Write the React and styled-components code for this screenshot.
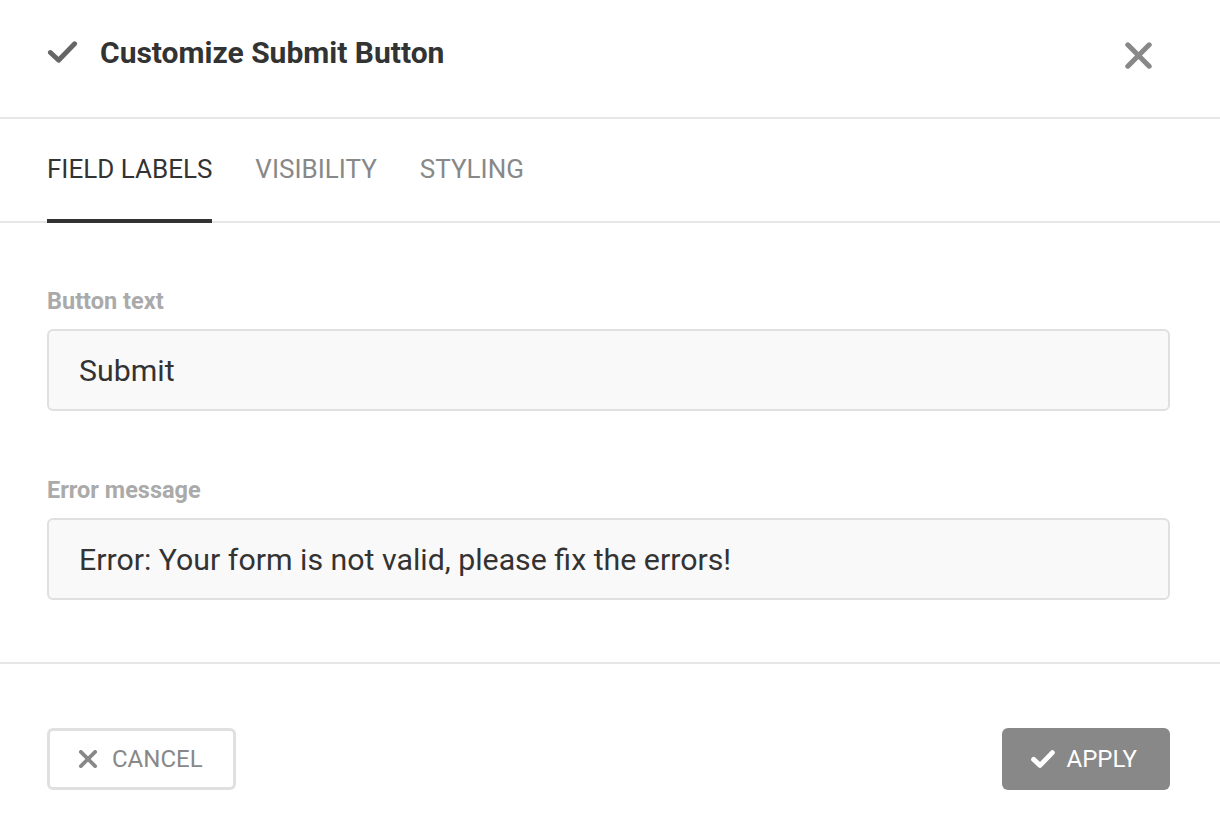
import React, { useState } from "react";
import styled, { createGlobalStyle } from "styled-components";

const GlobalStyle = createGlobalStyle`
  html, body {
    margin: 0;
    padding: 0;
    background: #fff;
    font-family: Roboto, "Liberation Sans", Arial, sans-serif;
  }
  * { box-sizing: border-box; }
`;

const Dialog = styled.div`
  width: 1220px;
  height: 839px;
  display: flex;
  flex-direction: column;
  background: #fff;
`;

const Header = styled.header`
  height: 119px;
  flex-shrink: 0;
  display: flex;
  align-items: center;
  padding: 0 68px 13px 47px;
  border-bottom: 2px solid #e6e6e6;
`;

const Title = styled.h1`
  flex: 1;
  margin: 0 0 0 22px;
  font-size: 30px;
  font-weight: 700;
  color: #333;
`;

const CloseBtn = styled.button`
  border: 0;
  background: none;
  padding: 0;
  display: flex;
  margin-top: 6px;
  cursor: pointer;
  color: #888;
`;

const TabBar = styled.nav`
  height: 104px;
  flex-shrink: 0;
  display: flex;
  gap: 43px;
  padding: 0 47px;
  border-bottom: 2px solid #e6e6e6;
`;

const Tab = styled.button`
  position: relative;
  border: 0;
  background: none;
  padding: 0 0 2px;
  font-family: inherit;
  font-size: 26px;
  font-weight: 400;
  color: ${(p) => (p.$active ? "#333" : "#888")};
  cursor: pointer;
  &::after {
    content: "";
    position: absolute;
    left: 0;
    right: 0;
    bottom: -2px;
    height: 4px;
    background: ${(p) => (p.$active ? "#333" : "transparent")};
  }
`;

const Content = styled.section`
  flex-shrink: 0;
  display: flex;
  flex-direction: column;
  gap: 67px;
  padding: 66px 50px 62px 47px;
  border-bottom: 2px solid #e6e6e6;
`;

const Field = styled.label`
  display: flex;
  flex-direction: column;
  gap: 16px;
`;

const Label = styled.span`
  font-size: 23.5px;
  line-height: 24px;
  font-weight: 700;
  color: #aaa;
`;

const Input = styled.input`
  height: 82px;
  width: 100%;
  padding: 0 30px;
  border: 2px solid #e0e0e0;
  border-radius: 6px;
  background: #f9f9f9;
  font-family: inherit;
  font-size: 30.3px;
  color: #333;
  outline: none;
`;

const Footer = styled.footer`
  flex: 1;
  display: flex;
  justify-content: space-between;
  align-items: flex-start;
  padding: 64px 50px 0 47px;
`;

const Button = styled.button`
  height: 62px;
  display: flex;
  align-items: center;
  gap: ${(p) => (p.$primary ? "12px" : "15px")};
  padding: ${(p) => (p.$primary ? "0 33px 0 29px" : "0 30px 0 29px")};
  border: ${(p) => (p.$primary ? "0" : "3px solid #e0e0e0")};
  border-radius: 6px;
  background: ${(p) => (p.$primary ? "#888" : "#fff")};
  color: ${(p) => (p.$primary ? "#fff" : "#888")};
  font-family: inherit;
  font-size: 24px;
  font-weight: 400;
  cursor: pointer;
`;

const CheckIcon = ({ width = 31, height = 24, stroke = 5, color = "currentColor" }) => (
  <svg width={width} height={height} viewBox="0 0 32 24" fill="none">
    <polyline
      points="3.5,12.5 12,20.5 28.5,3.5"
      stroke={color}
      strokeWidth={stroke}
      strokeLinecap="round"
      strokeLinejoin="round"
    />
  </svg>
);

const CloseIcon = ({ size = 27, stroke = 4.5 }) => (
  <svg width={size} height={size} viewBox="0 0 24 24" fill="none">
    <path
      d="M2.5 2.5L21.5 21.5M21.5 2.5L2.5 21.5"
      stroke="currentColor"
      strokeWidth={stroke}
      strokeLinecap="round"
    />
  </svg>
);

const tabs = ["FIELD LABELS", "VISIBILITY", "STYLING"];

export default function App() {
  const [active, setActive] = useState(0);
  const [buttonText, setButtonText] = useState("Submit");
  const [errorText, setErrorText] = useState(
    "Error: Your form is not valid, please fix the errors!"
  );

  return (
    <Dialog>
      <GlobalStyle />
      <Header>
        <CheckIcon color="#666" />
        <Title>Customize Submit Button</Title>
        <CloseBtn aria-label="Close">
          <CloseIcon />
        </CloseBtn>
      </Header>
      <TabBar>
        {tabs.map((t, i) => (
          <Tab key={t} $active={i === active} onClick={() => setActive(i)}>
            {t}
          </Tab>
        ))}
      </TabBar>
      <Content>
        <Field>
          <Label>Button text</Label>
          <Input value={buttonText} onChange={(e) => setButtonText(e.target.value)} />
        </Field>
        <Field>
          <Label>Error message</Label>
          <Input value={errorText} onChange={(e) => setErrorText(e.target.value)} />
        </Field>
      </Content>
      <Footer>
        <Button>
          <CloseIcon size={18} stroke={5} />
          CANCEL
        </Button>
        <Button $primary>
          <CheckIcon width={24} height={18} stroke={6.5} />
          APPLY
        </Button>
      </Footer>
    </Dialog>
  );
}
